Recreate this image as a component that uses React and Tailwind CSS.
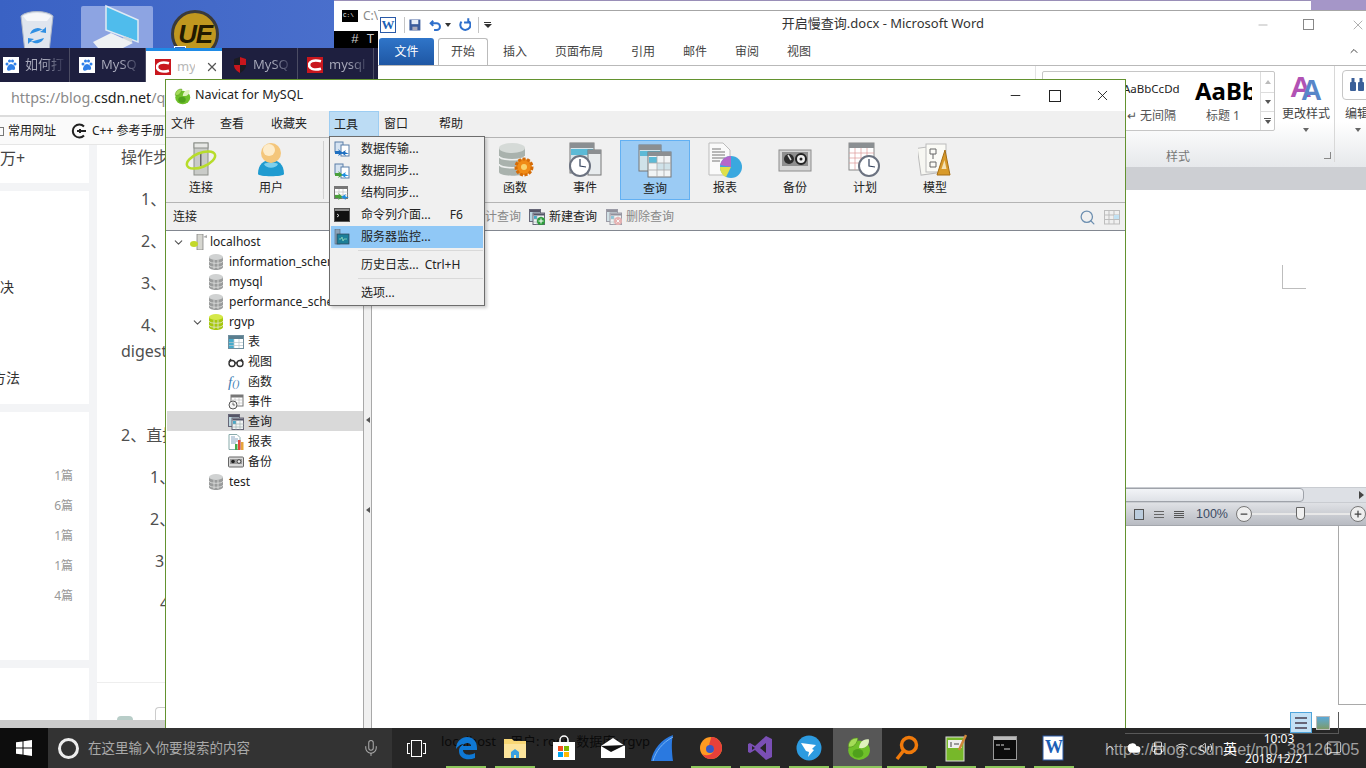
import { Minus, X, ChevronDown, ChevronUp, Search, Mic, Wifi, Volume2, Cloud, MessageSquare, Printer, Plus } from 'lucide-react'

const FONT = "[font-family:'Noto_Sans','Noto_Sans_CJK_SC',sans-serif]"

// ---------- icons ----------
function NavicatLogo({ size = 18 }) {
  return (
    <svg width={size} height={size} viewBox="0 0 24 24">
      <ellipse cx="13" cy="14" rx="10" ry="9" fill="#6fc02a" />
      <path d="M3 11C3 5 8 2 12 3 11 8 8 12 3 11z" fill="#a4dc58" stroke="#4f8d18" strokeWidth=".6" />
      <path d="M13 12c0-5 4-9 9-8 1 5-3 9-9 8z" fill="#dff2bd" />
      <ellipse cx="12" cy="17" rx="5" ry="4" fill="#4fa01b" />
    </svg>
  )
}

function ServerIcon() {
  return (
    <svg width="34" height="36" viewBox="0 0 34 36">
      <rect x="10" y="1" width="14" height="32" fill="#c9cbc8" stroke="#8c8f8a" />
      <rect x="10" y="1" width="14" height="5" fill="#e7e8e5" stroke="#8c8f8a" />
      <rect x="16" y="10" width="1.5" height="14" fill="#666" />
      <ellipse cx="17" cy="18" rx="15" ry="7" transform="rotate(-22 17 18)" fill="none" stroke="#b7dc2b" strokeWidth="2.5" />
    </svg>
  )
}

function UserIcon() {
  return (
    <svg width="30" height="36" viewBox="0 0 30 36">
      <path d="M2 32c0-10 6-14 13-14s13 4 13 14c0 3-26 3-26 0z" fill="#1f9bd0" />
      <path d="M8 22c3-2 11-2 14 0-2 5-12 5-14 0z" fill="#7fd0ec" />
      <circle cx="15" cy="11" r="10" fill="#f4c67b" />
      <circle cx="13" cy="8" r="6" fill="#fdeccb" />
    </svg>
  )
}

function TableBig() {
  return (
    <svg width="32" height="32" viewBox="0 0 32 32">
      <rect x="2" y="4" width="28" height="24" fill="#fff" stroke="#888" />
      <rect x="2" y="4" width="28" height="5" fill="#888" />
      <rect x="3" y="10" width="9" height="17" fill="#4fb5d6" />
      <path d="M2 15h28M2 21h28M12 9v19M21 9v19" stroke="#aaa" />
    </svg>
  )
}

function GlassesBig() {
  return (
    <svg width="32" height="32" viewBox="0 0 32 32" fill="none" stroke="#333" strokeWidth="2">
      <circle cx="9" cy="18" r="6" />
      <circle cx="23" cy="18" r="6" />
      <path d="M15 17h2M3 16l3-6M29 16l-3-6" />
    </svg>
  )
}

function DbGearIcon() {
  return (
    <svg width="38" height="36" viewBox="0 0 38 36">
      <path d="M3 6v24c0 5 26 5 26 0V6z" fill="#a9b2ad" />
      <ellipse cx="16" cy="6" rx="13" ry="5" fill="#d5dad7" />
      <path d="M3 14c0 5 26 5 26 0M3 22c0 5 26 5 26 0" fill="none" stroke="#eef0ef" strokeWidth="1.5" />
      <circle cx="28" cy="25" r="8" fill="#f08b16" stroke="#d46b08" strokeWidth="3" strokeDasharray="3 1.5" />
      <circle cx="28" cy="25" r="3" fill="#f9d26b" />
    </svg>
  )
}

function ClockFace({ x, y, r }) {
  return (
    <g>
      <circle cx={x} cy={y} r={r} fill="#fff" stroke="#6b7280" strokeWidth="2" />
      <path d={`M${x} ${y - r + 3}V${y}L${x + r - 4} ${y + 1}`} stroke="#33415c" strokeWidth="1.2" fill="none" />
    </g>
  )
}

function EventIcon() {
  return (
    <svg width="34" height="36" viewBox="0 0 34 36">
      <rect x="2" y="1" width="24" height="30" fill="#d8e6ec" stroke="#777" />
      <rect x="2" y="1" width="24" height="5" fill="#8b8f92" />
      <rect x="3" y="7" width="22" height="6" fill="#5cbad6" />
      <rect x="20" y="8" width="13" height="25" fill="#e8ecee" stroke="#777" />
      <rect x="20" y="8" width="13" height="4" fill="#8b8f92" />
      <ClockFace x={12} y={24} r={10} />
    </svg>
  )
}

function QueryIcon() {
  return (
    <svg width="34" height="34" viewBox="0 0 34 34">
      <rect x="1" y="1" width="22" height="26" fill="#cfe2e9" stroke="#777" />
      <rect x="1" y="1" width="22" height="5" fill="#8b8f92" />
      <rect x="2" y="7" width="20" height="5" fill="#5cbad6" />
      <rect x="10" y="8" width="23" height="25" fill="#f1f4f5" stroke="#777" />
      <rect x="10" y="8" width="23" height="4" fill="#8b8f92" />
      <rect x="11" y="13" width="8" height="6" fill="#5cbad6" />
      <rect x="19" y="19" width="13" height="7" fill="#cfe2e9" />
      <path d="M10 19h23M10 26h23M19 12v21M26 12v21" stroke="#aaa" strokeWidth=".8" />
    </svg>
  )
}

function ReportIcon() {
  return (
    <svg width="36" height="36" viewBox="0 0 36 36">
      <path d="M2 1h14l7 7v25H2z" fill="#fafafa" stroke="#bbb" />
      <path d="M5 7h9M5 10h13M5 13h13M5 16h13M5 19h8" stroke="#777" strokeWidth="1" />
      <circle cx="24" cy="25" r="11" fill="#3aa8df" />
      <path d="M24 25V14a11 11 0 0 0-11 9z" fill="#b567c9" />
      <path d="M24 25H13c0 5 3 9 6 10z" fill="#dfe04a" />
    </svg>
  )
}

function BackupIcon() {
  return (
    <svg width="34" height="28" viewBox="0 0 34 28">
      <rect x="1" y="4" width="32" height="21" fill="#d6d6d6" stroke="#8c8c8c" />
      <rect x="4" y="6" width="26" height="14" fill="#8f8f8f" />
      <circle cx="11" cy="13" r="5" fill="#2d2d2d" />
      <circle cx="23" cy="13" r="5" fill="#eee" stroke="#222" strokeWidth="2" />
      <circle cx="23" cy="13" r="1.5" fill="#222" />
      <path d="M10 9l3 5" stroke="#ddd" strokeWidth="1.5" />
    </svg>
  )
}

function ScheduleIcon() {
  return (
    <svg width="34" height="36" viewBox="0 0 34 36">
      <rect x="1" y="1" width="25" height="27" fill="#fff" stroke="#888" />
      <rect x="1" y="1" width="25" height="5" fill="#8b8f92" />
      <path d="M1 11h25M1 16h25M1 21h25M7 6v22M13 6v22M19 6v22" stroke="#d99" strokeWidth=".7" />
      <ClockFace x={21} y={24} r={10} />
    </svg>
  )
}

function ModelIcon() {
  return (
    <svg width="34" height="36" viewBox="0 0 34 36">
      <rect x="1" y="5" width="19" height="27" fill="#f7f7f2" stroke="#bbb" transform="rotate(-8 10 18)" />
      <rect x="8" y="2" width="20" height="28" fill="#fbfbf6" stroke="#bbb" />
      <path d="M12 7h6v5h-6zM15 12v5M12 20h6v5h-6z" fill="none" stroke="#666" />
      <path d="M27 8l5 25H19z" fill="#d89a2a" stroke="#a56d14" />
      <path d="M26.500 18l2 9h-5z" fill="#f4e2b5" />
    </svg>
  )
}

function MiniDb({ color = 'gray' }) {
  const body = color === 'lime' ? '#a7c80e' : '#9a9c9c'
  const top = color === 'lime' ? '#d5e84a' : '#d0d2d2'
  return (
    <svg width="14" height="16" viewBox="0 0 14 16" className="shrink-0">
      <path d="M0 3v10c0 4 14 4 14 0V3z" fill={body} />
      <ellipse cx="7" cy="3" rx="7" ry="3" fill={top} />
      <path d="M0 7c0 3 14 3 14 0M0 11c0 3 14 3 14 0M5 6v9M9 6v9" fill="none" stroke="#e9ebe9" strokeWidth=".7" />
    </svg>
  )
}

function HostIcon() {
  return (
    <svg width="18" height="16" viewBox="0 0 18 16" className="shrink-0">
      <rect x="7" y="0" width="6" height="16" fill="#d6d6d0" stroke="#777" strokeWidth=".7" />
      <path d="M13 3l4-2v3z" fill="#aaa" />
      <ellipse cx="4" cy="10" rx="4" ry="3" fill="#c3d82a" />
    </svg>
  )
}

const miniBase = { width: 16, height: 16, viewBox: '0 0 16 16', className: 'shrink-0' }
function MiniTable() {
  return (
    <svg {...miniBase}>
      <rect x=".5" y="1.500" width="15" height="13" fill="#fff" stroke="#6f8f9f" />
      <rect x="1" y="2" width="14" height="3" fill="#5b7e8e" />
      <rect x="1" y="5" width="5" height="9" fill="#45aacb" />
      <path d="M1 8.500h14M1 11.500h14M6 5v9M11 5v9" stroke="#b8c6cc" strokeWidth=".7" />
    </svg>
  )
}
function MiniGlasses() {
  return (
    <svg {...miniBase} fill="none" stroke="#333" strokeWidth="1.400">
      <circle cx="4" cy="9.500" r="3" />
      <circle cx="12" cy="9.500" r="3" />
      <path d="M7 9h2M1 8l2-3M15 8l-2-3" />
    </svg>
  )
}
function MiniFo() {
  return <span className="w-4 shrink-0 [font-family:'Liberation_Serif',serif] italic text-[15px] leading-none text-[#3f7fb5]">f<span className="text-[11px]">()</span></span>
}
function MiniEvent() {
  return (
    <svg {...miniBase}>
      <rect x="3" y="1" width="12" height="11" fill="#fff" stroke="#777" />
      <rect x="3" y="1" width="12" height="2.500" fill="#777" />
      <path d="M3 6h12M3 9h12M7 3v9M11 3v9" stroke="#bbb" strokeWidth=".6" />
      <circle cx="5" cy="11" r="4" fill="#f4f4f4" stroke="#555" />
      <path d="M5 8.500V11h2" stroke="#333" strokeWidth=".7" fill="none" />
    </svg>
  )
}
function MiniQuery({ badge }) {
  return (
    <svg {...miniBase}>
      <rect x=".5" y=".5" width="11" height="12" fill="#bcd6df" stroke="#667" />
      <rect x="1" y="1" width="10" height="2" fill="#556" />
      <rect x="4" y="4" width="11.500" height="11.500" fill="#f2f5f6" stroke="#667" />
      <rect x="4.500" y="4.500" width="11" height="2" fill="#556" />
      <rect x="5" y="7" width="3" height="3" fill="#45aacb" />
      <path d="M4 10h12M4 13h12M8 6v10M12 6v10" stroke="#9aa" strokeWidth=".6" />
      {badge === 'add' && <g><circle cx="12" cy="12" r="4" fill="#2e9c3c" /><path d="M12 9.500v5M9.500 12h5" stroke="#fff" /></g>}
      {badge === 'del' && <g><circle cx="12" cy="12" r="4" fill="#e08a8a" /><path d="M10.500 10.500l3 3M13.500 10.500l-3 3" stroke="#fff" /></g>}
    </svg>
  )
}
function MiniReport() {
  return (
    <svg {...miniBase}>
      <path d="M1 .5h8l3 3v12H1z" fill="#fff" stroke="#8aa" />
      <path d="M3 3h4M3 5h7M3 7h7M3 9h5" stroke="#6b8fb0" strokeWidth=".8" />
      <rect x="7" y="10" width="2.500" height="6" fill="#49a94a" />
      <rect x="10" y="6" width="2.500" height="10" fill="#e2483d" />
      <rect x="13" y="8" width="2.500" height="8" fill="#e8a33a" />
    </svg>
  )
}
function MiniBackup() {
  return (
    <svg {...miniBase}>
      <rect x=".5" y="3" width="15" height="10" rx="1" fill="#d8d8d8" stroke="#666" />
      <rect x="2" y="5" width="12" height="5" fill="#999" />
      <circle cx="5" cy="7.500" r="1.800" fill="#222" />
      <circle cx="11" cy="7.500" r="1.800" fill="#eee" stroke="#222" strokeWidth=".7" />
    </svg>
  )
}
function MenuDocs({ arrow = '#1f6fc0', table }) {
  return (
    <svg {...miniBase}>
      {table ? (
        <g>
          <rect x=".5" y="1.500" width="13" height="12" fill="#fff" stroke="#777" />
          <rect x="1" y="2" width="12" height="2" fill="#777" />
          <path d="M1 7h13M1 10h13M5 4v10M9 4v10" stroke="#bbb" strokeWidth=".6" />
        </g>
      ) : (
        <g>
          <rect x="1" y="1" width="8" height="10" fill="#d6e3f1" stroke="#5b7ea8" />
          <rect x="7" y="4" width="8" height="11" fill="#fff" stroke="#5b7ea8" />
        </g>
      )}
      <path d="M1 10l4 0-1-2 5 4-5 3 1-2-4 0z" fill={table ? '#49a03a' : arrow === '#1f6fc0' ? '#1f6fc0' : '#49a03a'} />
      <path d="M15 8l-4 0 1 2-5-3 5-3-1 2z" transform="translate(0 5)" fill={arrow} />
    </svg>
  )
}
function MenuConsole() {
  return (
    <svg {...miniBase}>
      <rect x=".5" y="1.500" width="15" height="13" fill="#111" stroke="#555" />
      <rect x="1" y="2" width="14" height="2" fill="#888" />
      <path d="M3 7l2 1.500L3 10" stroke="#fff" fill="none" strokeWidth=".8" />
    </svg>
  )
}
function MenuMonitor() {
  return (
    <svg {...miniBase}>
      <rect x="1" y="0" width="5" height="15" fill="#8ba3b8" stroke="#567" strokeWidth=".6" />
      <rect x="3" y="5" width="12" height="10" fill="#1d7f99" stroke="#345" strokeWidth=".7" />
      <path d="M5 10h2l1-2 1 4 1-2h3" stroke="#9fe6c0" fill="none" strokeWidth=".7" />
    </svg>
  )
}

function SearchMini() {
  return <Search size={17} className="text-[#6d8fb0]" strokeWidth={1.8} />
}
function GridMini() {
  return (
    <svg width="16" height="16" viewBox="0 0 16 16" fill="none" stroke="#bdbdbd">
      <path d="M.5 1v14M5 1v14M10 1v14M15.500 1v14M0 1.500h16M0 6h16M0 10.500h16M0 15h16" />
      <rect x="10" y="6" width="5" height="4" fill="#c2e2f4" stroke="none" />
    </svg>
  )
}

function RecycleBin() {
  return (
    <svg width="38" height="42" viewBox="0 0 38 42">
      <path d="M3 6c6-6 26-6 32 0l-4 36H7z" fill="#dfe5ee" stroke="#aeb8c8" />
      <path d="M5 6c8-4 20-4 28 0l-4 5H9z" fill="#f5f7fa" />
      <path d="M12 24a8 8 0 0 1 13-4l-3 2 6 1 0-6-2 2M26 28a8 8 0 0 1-13 3l3-2-6-1 0 6 2-2" fill="#2f8fe3" />
    </svg>
  )
}
function ComputerIcon() {
  return (
    <svg width="50" height="44" viewBox="0 0 50 44">
      <path d="M14 2l32 14v22L14 26z" fill="#4fbcec" stroke="#dfeaf4" strokeWidth="1.500" />
      <path d="M32 32l8 3 0 4-10-2z" fill="#cfd6dc" />
      <path d="M1 38l18-9 22 10-10 5H6z" fill="#eef1f4" />
    </svg>
  )
}
function UeCoin() {
  return (
    <div className="relative flex h-12 w-12 items-center justify-center rounded-full border-[3px] border-[#3a3a3a] bg-[#c0971f]">
      <span className="[font-family:'Liberation_Sans',sans-serif] text-[26px] font-bold italic leading-none tracking-tighter text-[#221a00]">UE</span>
      <span className="absolute bottom-[1px] left-0 h-[8px] w-[12px] border border-white bg-[#2f66c4]" />
    </div>
  )
}
function PawTile() {
  return (
    <div className="flex h-4 w-4 shrink-0 items-center justify-center bg-white">
      <svg width="14" height="14" viewBox="0 0 14 14" fill="#2f7fe8">
        <circle cx="3" cy="6" r="1.500" /><circle cx="5.500" cy="3" r="1.500" /><circle cx="8.500" cy="3" r="1.500" /><circle cx="11" cy="6" r="1.500" />
        <path d="M7 6c-2 0-4 3-4 5s2 2 4 1 3 1 4-1-2-5-4-5z" />
      </svg>
    </div>
  )
}
function CsdnTile() {
  return (
    <div className="flex h-4 w-4 shrink-0 items-center justify-center bg-[#c9171e]">
      <svg width="14" height="12" viewBox="0 0 14 12" fill="none" stroke="#fff" strokeWidth="2.600"><path d="M13 2.300C5 0 1 3 1 6s4 6 12 3.700" /></svg>
    </div>
  )
}
function ShieldTile() {
  return (
    <svg width="14" height="16" viewBox="0 0 14 16" className="shrink-0">
      <path d="M1 2l6-2 6 2v6c0 4-3 6-6 8-3-2-6-4-6-8z" fill="#1b1b22" />
      <path d="M7 0l6 2v6H7zM1 8h6v8c-3-2-6-4-6-8z" fill="#c8161d" />
    </svg>
  )
}
function WordLogo({ size = 16 }) {
  return (
    <div style={{ width: size, height: size }} className="flex shrink-0 items-center justify-center border border-[#2a5aa8] bg-white">
      <span className="[font-family:'Liberation_Serif',serif] text-[13px] font-bold leading-none text-[#1c5fb6]">W</span>
    </div>
  )
}

// ---------- browser behind everything ----------
const tabs = [
  { text: '如何打', icon: <PawTile />, w: 'w-[70px]', pad: 'pl-[3px]' },
  { text: 'MySQ', icon: <PawTile />, w: 'w-[76px]', pad: 'pl-[9px]' },
  { text: 'my', icon: <CsdnTile />, w: 'w-[76px]', pad: 'pl-[9px]', active: true },
  { text: 'MySQ', icon: <ShieldTile />, w: 'w-[76px]', pad: 'pl-[11px]' },
  { text: 'mysql', icon: <CsdnTile />, w: 'w-[76px]', pad: 'pl-[9px]' },
]

const bodyLines = [
  { t: '操作步骤', cls: 'pl-[24px]', mt: 'mt-0' },
  { t: '1、', cls: 'pl-[44px]', mt: 'mt-[18px]' },
  { t: '2、', cls: 'pl-[44px]', mt: 'mt-[18px]' },
  { t: '3、', cls: 'pl-[44px]', mt: 'mt-[18px]' },
  { t: '4、', cls: 'pl-[44px]', mt: 'mt-[18px]' },
  { t: 'digest', cls: 'pl-[24px]', mt: 'mt-[2px]' },
  { t: '2、直接', cls: 'pl-[24px]', mt: 'mt-[60px]' },
  { t: '1、', cls: 'pl-[53px]', mt: 'mt-[18px]' },
  { t: '2、', cls: 'pl-[53px]', mt: 'mt-[18px]' },
  { t: '3', cls: 'pl-[58px]', mt: 'mt-[18px]' },
  { t: '4', cls: 'pl-[63px]', mt: 'mt-[18px]' },
]

function Browser() {
  return (
    <div className="absolute left-0 top-[48px] flex h-[680px] w-[380px] flex-col overflow-hidden bg-[#f3f4f6]">
      <div className="flex h-[34px] shrink-0 bg-[#1e1f3f]">
        {tabs.map((t, i) => (
          <div
            key={i}
            className={`flex ${t.w} ${t.pad} shrink-0 items-center gap-[6px] text-[13px] ${t.active ? 'border-t-[3px] border-[#1f8be6] bg-white text-[#b7b7b7]' : 'border-r border-[#4b4c63] text-[#8e8fa0]'}`}
          >
            {t.icon}
            {t.active ? (
              <span className="w-[18px] overflow-hidden whitespace-nowrap">{t.text}</span>
            ) : (
              <span className="w-[40px] overflow-hidden whitespace-nowrap bg-gradient-to-r from-[#a9aabb] from-50% to-[#2a2b4a] bg-clip-text text-transparent">{t.text}</span>
            )}
            {t.active && <X size={14} strokeWidth={2.2} className="ml-[4px] shrink-0 text-[#555]" />}
          </div>
        ))}
      </div>
      <div className="flex h-[35px] shrink-0 items-center border-b-2 border-[#dcdcdc] bg-white pl-[11px] text-[14.300px] leading-none text-[#8a8a8a]">
        https://blog.<span className="text-[#222]">csdn.net</span>/q
      </div>
      <div className="flex h-[28px] shrink-0 items-center gap-[3px] whitespace-nowrap border-b border-[#e6e6e6] bg-[#fafafa] pt-px text-[12px] text-[#222]">
        <div className="ml-[-3px] mr-[1px] h-[9px] w-[7px] border border-[#777]" />
        <span>常用网址</span>
        <svg width="16" height="16" viewBox="0 0 16 16" fill="none" stroke="#222" strokeWidth="2" className="ml-[12px]">
          <path d="M13 3.500A6.500 6.500 0 1 0 13 12.500M6 8h9M9 6v4" />
        </svg>
        <span className="ml-[2px]">C++ 参考手册</span>
      </div>
      <div className="flex flex-1 overflow-hidden">
        <div className="flex w-[89px] shrink-0 flex-col gap-2">
          <div className="h-[38px] shrink-0 bg-white pt-[1px] text-[16px] text-[#444]">万+</div>
          <div className="flex h-[213px] shrink-0 flex-col bg-white text-[14px] text-[#333]">
            <div className="mt-[85px]">决</div>
            <div className="ml-[-8px] mt-[70px]">方法</div>
          </div>
          <div className="flex h-[248px] shrink-0 flex-col items-end gap-[12px] bg-white pr-[16px] pt-[55px] text-[12px] leading-[18px] text-[#999]">
            {['1篇', '6篇', '1篇', '1篇', '4篇'].map((c, i) => <span key={i}>{c}</span>)}
          </div>
          <div className="flex-1 bg-white" />
        </div>
        <div className="relative ml-2 flex-1 bg-white">
          {bodyLines.map((l, i) => (
            <div key={i} className={`h-6 whitespace-nowrap text-[16px] leading-6 text-[#4f4f4f] ${l.cls} ${l.mt}`}>{l.t}</div>
          ))}
          <div className="absolute bottom-[30px] left-0 right-0 h-[8px] border-t border-[#eee]" />
          <div className="absolute bottom-0 left-[20px] h-[4px] w-[16px] rounded-t-full bg-[#b8cdc8]" />
          <div className="absolute bottom-0 left-[58px] h-[13px] w-full rounded-tl-sm border-l border-t border-[#ccc]" />
        </div>
      </div>
      <div className="h-[8px] shrink-0 bg-[#cccccc]" />
    </div>
  )
}

// ---------- word ----------
function Word() {
  return (
    <div className="absolute left-[378px] top-[10px] flex h-[516px] w-[988px] flex-col overflow-hidden border-t border-[#a6a6a6] bg-white">
      <div className="flex h-[27px] shrink-0 items-center text-[#444]">
        <div className="ml-[2px]"><WordLogo /></div>
        <div className="ml-[8px] h-4 w-px bg-[#c5c5c5]" />
        <svg width="14" height="14" viewBox="0 0 14 14" className="ml-[4px]"><rect x=".5" y=".5" width="13" height="13" fill="#3c5c9c" /><rect x="3" y="1" width="8" height="5" fill="#e8eef8" /><rect x="4" y="9" width="6" height="4" fill="#aab" /></svg>
        <svg width="16" height="16" viewBox="0 0 16 16" fill="none" stroke="#2e6fcb" strokeWidth="2.400" className="ml-[8px]"><path d="M5 3L2 6l3 3M2 6h7a4 4 0 0 1 0 8H6" /></svg>
        <span className="ml-[3px] h-0 w-0 border-x-[3px] border-t-[4px] border-x-transparent border-t-[#333]" />
        <svg width="14" height="15" viewBox="0 0 14 15" fill="none" stroke="#2e6fcb" strokeWidth="2.400" className="ml-[8px]"><path d="M11 3a6 6 0 1 1-8 1M11 0v5H6" /></svg>
        <div className="ml-[7px] h-4 w-px bg-[#c5c5c5]" />
        <div className="ml-[5px] flex flex-col items-center gap-[1px]"><span className="h-px w-[7px] bg-[#333]" /><span className="h-0 w-0 border-x-[4px] border-t-[4px] border-x-transparent border-t-[#333]" /></div>
        <div className="mb-[2px] ml-[290px] w-[210px] whitespace-nowrap text-[13px] text-[#333]">开启慢查询.docx - Microsoft Word</div>
        <Minus size={14} strokeWidth={1} className="ml-[272px] shrink-0 text-[#888]" />
        <span className="ml-[33px] h-[11px] w-[11px] shrink-0 border border-[#888]" />
        <X size={16} strokeWidth={1} className="ml-[36px] shrink-0 text-[#888]" />
      </div>
      <div className="flex h-[27px] shrink-0 items-end text-[12px] text-[#444]">
        <div className="ml-px flex h-[27px] w-[55px] items-center justify-center rounded-t-[3px] bg-gradient-to-b from-[#2f75c9] to-[#1f57a4] text-white">文件</div>
        <div className="ml-[4px] flex h-[27px] w-[50px] items-center justify-center rounded-t-[3px] border border-b-0 border-[#bbb] bg-white">开始</div>
        <div className="ml-[15px] flex h-[27px] items-center gap-[28px]">
          <span>插入</span><span>页面布局</span><span>引用</span><span>邮件</span><span>审阅</span><span>视图</span>
        </div>
        <ChevronUp size={12} strokeWidth={2} className="mb-[8px] ml-[537px] shrink-0 text-[#444]" />
      </div>
      <div className="flex h-[102px] shrink-0 border-t border-[#b9b9b9] bg-gradient-to-b from-white from-55% to-[#e6e8eb]">
        <div className="ml-[657px] h-[96px] w-px shrink-0 bg-[#e3e3e3]" />
        <div className="ml-[6px] flex w-[292px] shrink-0 flex-col">
          <div className="flex h-[65px] items-start pt-[5px]">
            <div className="flex h-[60px] w-[233px] shrink-0 rounded-[2px] border border-[#c6c6c6] bg-white">
              <div className="flex w-[209px] shrink-0 overflow-hidden pl-[80px] pt-[7px]">
                <div className="flex w-[72px] shrink-0 flex-col">
                  <span className="whitespace-nowrap text-[11.500px] leading-[20px] text-[#222]">AaBbCcDd</span>
                  <span className="mt-[8px] whitespace-nowrap pl-[4px] text-[12px] leading-[18px] text-[#555]">↵ 无间隔</span>
                </div>
                <div className="flex shrink-0 flex-col">
                  <span className="whitespace-nowrap text-[24px] font-bold leading-[24px] text-black">AaBb</span>
                  <span className="mt-[4px] whitespace-nowrap pl-[11px] text-[12px] leading-[18px] text-[#555]">标题 1</span>
                </div>
              </div>
              <div className="ml-auto flex w-[14px] shrink-0 flex-col border-l border-[#ddd] text-[#666]">
                <div className="flex h-[20px] items-center justify-center"><span className="h-0 w-0 border-x-[3px] border-b-[4px] border-x-transparent border-b-[#bbb]" /></div>
                <div className="flex h-[20px] items-center justify-center border-y border-[#ddd]"><span className="h-0 w-0 border-x-[3px] border-t-[4px] border-x-transparent border-t-[#555]" /></div>
                <div className="flex flex-1 flex-col items-center justify-center gap-[1px]"><span className="h-px w-[7px] bg-[#555]" /><span className="h-0 w-0 border-x-[3px] border-t-[4px] border-x-transparent border-t-[#555]" /></div>
              </div>
            </div>
            <div className="flex w-[58px] shrink-0 flex-col items-center pl-[4px]">
              <div className="relative h-[32px] w-[32px] [font-family:'Liberation_Sans',sans-serif]">
                <span className="absolute left-0 top-0 text-[30px] font-bold leading-[32px] text-[#b152b4]">A</span>
                <span className="absolute left-[11px] top-[3px] text-[29px] font-bold leading-[32px] text-[#5886c9]">A</span>
              </div>
              <span className="mt-[3px] whitespace-nowrap text-[12px] leading-[16px] text-[#444]">更改样式</span>
              <span className="mt-[6px] h-0 w-0 border-x-[3px] border-t-[4px] border-x-transparent border-t-[#666]" />
            </div>
          </div>
          <div className="relative mt-[17px] pl-[124px] text-[12px] leading-[18px] text-[#777]">
            样式
            <span className="absolute right-[3px] top-[4px] h-[7px] w-[7px] border-b border-r border-[#888]" />
          </div>
        </div>
        <div className="h-[96px] w-px shrink-0 bg-[#d8d8d8]" />
        <div className="ml-[7px] flex shrink-0 flex-col">
          <div className="mt-[4px] flex h-[30px] w-[40px] items-center rounded border border-[#c6c6c6] bg-white pl-[6px]">
            <svg width="16" height="14" viewBox="0 0 16 14" fill="#3a5f99"><rect x="1" y="4" width="6" height="9" rx="1" /><rect x="9" y="4" width="6" height="9" rx="1" /><rect x="2.500" y="0" width="3" height="5" /><rect x="10.500" y="0" width="3" height="5" /></svg>
          </div>
          <span className="ml-[3px] mt-[6px] whitespace-nowrap text-[12px] leading-[16px] text-[#444]">编辑</span>
          <span className="ml-[13px] mt-[6px] h-0 w-0 border-x-[3px] border-t-[4px] border-x-transparent border-t-[#666]" />
        </div>
      </div>
      <div className="h-[23px] shrink-0 bg-[#cdcfd3]" />
      <div className="relative flex-1 bg-white">
        <div className="absolute left-[904px] top-[75px] h-[24px] w-[24px] border-b border-l border-[#bdbdbd]" />
      </div>
      <div className="flex h-[16px] shrink-0 border-y border-[#c9ccd1] bg-[#dde0e5]">
        <div className="ml-[700px] w-[226px] shrink-0 rounded-sm border border-[#9fa3aa] bg-gradient-to-b from-[#f2f4f7] to-[#dfe2e7]" />
        <span className="ml-[55px] mt-[3px] h-0 w-0 border-y-[4px] border-l-[5px] border-y-transparent border-l-[#444]" />
      </div>
      <div className="flex h-[23px] shrink-0 items-center border-b border-[#a4a7ad] bg-gradient-to-b from-[#dfe1e5] to-[#b8bbc2] text-[#444]">
        <div className="ml-[743px] flex shrink-0 items-center gap-[10px]">
          <span className="h-[9px] w-[3px] border border-[#555]" />
          <span className="h-[11px] w-[10px] border border-[#555] bg-[#bcd] " />
          <div className="flex w-[10px] flex-col gap-[2px]"><span className="h-px bg-[#666]" /><span className="h-px bg-[#666]" /><span className="h-px bg-[#666]" /></div>
          <div className="flex w-[10px] flex-col gap-px"><span className="h-px bg-[#555]" /><span className="h-px bg-[#555]" /><span className="h-px bg-[#555]" /><span className="h-px bg-[#555]" /></div>
        </div>
        <span className="ml-[12px] shrink-0 [font-family:'Liberation_Sans',sans-serif] text-[12.500px] text-[#3b4a63]">100%</span>
        <div className="ml-[8px] flex h-4 w-4 shrink-0 items-center justify-center rounded-full border border-[#777] bg-[#eee]"><Minus size={10} strokeWidth={3} /></div>
        <div className="relative h-[2px] w-[98px] shrink-0 bg-[#e8e8e8]">
          <div className="absolute left-[44px] top-[-6px] h-[13px] w-[9px] rounded-b-[4px] border border-[#666] bg-[#f0f0f0]" />
        </div>
        <div className="flex h-4 w-4 shrink-0 items-center justify-center rounded-full border border-[#777] bg-[#eee]"><Plus size={10} strokeWidth={3} /></div>
      </div>
    </div>
  )
}

// ---------- navicat ----------
const menuBar = [
  { t: '文件', cls: 'ml-[5px]' },
  { t: '查看', cls: 'ml-[25px]' },
  { t: '收藏夹', cls: 'ml-[27px]' },
  { t: '工具', cls: 'ml-[22px] h-[26px] w-[50px] pl-[4px] bg-[#bcdcf4] border border-[#9dcdf2] border-b-0', active: true },
  { t: '窗口', cls: 'ml-[5px]' },
  { t: '帮助', cls: 'ml-[31px]' },
]

const tools = [
  { t: '连接', icon: <ServerIcon /> },
  { t: '用户', icon: <UserIcon /> },
  { sep: true },
  { t: '表', icon: <TableBig /> },
  { t: '视图', icon: <GlassesBig /> },
  { t: '函数', icon: <DbGearIcon /> },
  { t: '事件', icon: <EventIcon /> },
  { t: '查询', icon: <QueryIcon />, active: true },
  { t: '报表', icon: <ReportIcon /> },
  { t: '备份', icon: <BackupIcon /> },
  { t: '计划', icon: <ScheduleIcon /> },
  { t: '模型', icon: <ModelIcon /> },
]

const tree = [
  { t: 'localhost', icon: <HostIcon />, chev: true, level: 0 },
  { t: 'information_schema', icon: <MiniDb />, level: 1 },
  { t: 'mysql', icon: <MiniDb />, level: 1 },
  { t: 'performance_schema', icon: <MiniDb />, level: 1 },
  { t: 'rgvp', icon: <MiniDb color="lime" />, chev: true, level: 1 },
  { t: '表', icon: <MiniTable />, level: 2 },
  { t: '视图', icon: <MiniGlasses />, level: 2 },
  { t: '函数', icon: <MiniFo />, level: 2 },
  { t: '事件', icon: <MiniEvent />, level: 2 },
  { t: '查询', icon: <MiniQuery />, level: 2, active: true },
  { t: '报表', icon: <MiniReport />, level: 2 },
  { t: '备份', icon: <MiniBackup />, level: 2 },
  { t: 'test', icon: <MiniDb />, level: 1 },
]

function TreeRow({ row }) {
  const indent = row.level === 0 ? 'pl-[5px]' : row.level === 1 ? (row.chev ? 'pl-[24px]' : 'pl-[42px]') : 'pl-[61px]'
  return (
    <div className={`flex h-5 items-center whitespace-nowrap pt-[2px] text-[12px] text-[#222] ${indent} ${row.active ? 'bg-[#d9d9d9]' : ''}`}>
      {row.chev && <ChevronDown size={13} strokeWidth={2} className="mr-[5px] shrink-0 text-[#555]" />}
      {row.icon}
      <span className={row.level === 0 ? 'ml-[2px]' : row.level === 1 ? 'ml-[6px]' : 'ml-[4px]'}>{row.t}</span>
    </div>
  )
}

function Navicat() {
  return (
    <div className={`absolute left-[165px] top-[79px] flex h-[649px] w-[961px] flex-col border-x border-t border-[#63922f] bg-white ${FONT}`}>
      <div className="flex h-[31px] shrink-0 items-center pl-[7px]">
        <NavicatLogo />
        <span className="ml-[4px] text-[12.500px] text-[#222]">Navicat for MySQL</span>
        <Minus size={15} strokeWidth={1.4} className="ml-auto text-[#111]" />
        <span className="ml-[26px] h-3 w-3 border-[1.5px] border-[#222]" />
        <X size={17} strokeWidth={1.2} className="ml-[33px] mr-[14px] text-[#111]" />
      </div>
      <div className="flex h-[27px] shrink-0 items-center border-b border-[#b4b4b4] bg-[#f0f0f0] text-[12px] text-[#222]">
        {menuBar.map(m => (
          <div key={m.t} className={`flex items-center ${m.cls}`}>{m.t}</div>
        ))}
      </div>
      <div className="flex h-[65px] shrink-0 items-center border-b border-[#b4b4b4] bg-[#f0f0f0]">
        {tools.map((b, i) => b.sep ? (
          <div key={i} className="ml-[17px] mr-[16px] h-[58px] w-px bg-[#cfcfcf]" />
        ) : (
          <div key={i} className={`flex h-[60px] w-[70px] shrink-0 flex-col items-center ${b.active ? 'border border-[#62b0f3] bg-[#9bcbf4]' : ''}`}>
            <div className="flex h-[39px] items-center">{b.icon}</div>
            <span className="text-[12px] leading-[18px] text-[#222]">{b.t}</span>
          </div>
        ))}
      </div>
      <div className="flex h-[28px] shrink-0 items-center border-b border-[#828790] bg-[#f0f0f0] pl-[7px] pr-[5px] pt-px text-[12px] text-[#888]">
        <span className="text-[#222]">连接</span>
        <span className="ml-[145px]">打开查询</span>
        <span className="ml-[83px]">设计查询</span>
        <div className="ml-[8px]"><MiniQuery badge="add" /></div>
        <span className="ml-[4px] text-[#222]">新建查询</span>
        <div className="ml-[9px] opacity-60"><MiniQuery badge="del" /></div>
        <span className="ml-[4px]">删除查询</span>
        <div className="ml-auto mr-[8px]"><SearchMini /></div>
        <GridMini />
      </div>
      <div className="flex min-h-0 flex-1">
        <div className="w-[197px] shrink-0 overflow-hidden pl-px">
          {tree.map(r => <TreeRow key={r.t} row={r} />)}
        </div>
        <div className="flex w-[9px] shrink-0 flex-col items-center border-x border-[#a8a8a8] bg-[#f0f0f0] pt-[186px]">
          <span className="h-0 w-0 border-y-[3px] border-r-[4px] border-y-transparent border-r-[#555]" />
          <span className="mt-[84px] h-0 w-0 border-y-[3px] border-r-[4px] border-y-transparent border-r-[#555]" />
        </div>
        <div className="flex-1 bg-white" />
      </div>
    </div>
  )
}

const toolMenu = [
  { t: '数据传输...', icon: <MenuDocs /> },
  { t: '数据同步...', icon: <MenuDocs arrow="#1f8fdf" /> },
  { t: '结构同步...', icon: <MenuDocs table arrow="#1f8fdf" /> },
  { t: '命令列介面...', icon: <MenuConsole />, key: 'F6', keyCls: 'ml-[19px]' },
  { t: '服务器监控...', icon: <MenuMonitor />, active: true },
  { sep: true },
  { t: '历史日志...', key: 'Ctrl+H', keyCls: 'ml-[6px]', tall: true },
  { sep: true },
  { t: '选项...', tall: true },
]

function ToolMenu() {
  return (
    <div className={`absolute left-[329px] top-[136px] h-[170px] w-[156px] border border-[#6d6d6d] bg-[#f0f0f0] px-px pt-[1px] shadow-[2px_2px_3px_rgba(0,0,0,0.2)] ${FONT}`}>
      {toolMenu.map((m, i) => m.sep ? (
        <div key={i} className="my-[2px] ml-[27px] h-px bg-[#d9d9d9]" />
      ) : (
        <div key={i} className={`flex items-center text-[12px] text-[#222] ${m.tall ? 'mt-[-1px] h-[24px] pt-[2px]' : 'h-[22px]'} ${m.active ? 'bg-[#90c8f6]' : ''}`}>
          <div className="flex w-[30px] justify-start pl-[3px]">{m.icon}</div>
          <span className="whitespace-nowrap">{m.t}</span>
          {m.key && <span className={`whitespace-nowrap ${m.keyCls}`}>{m.key}</span>}
        </div>
      ))}
    </div>
  )
}

// ---------- taskbar ----------
const pinned = [
  { id: 'edge', on: true, el: <svg width="24" height="24" viewBox="0 0 24 24"><path d="M2 13C2 5 8 1 13 1c6 0 10 4 10 11v2H9c0 5 7 6 12 3v5c-7 3-16 1-16-7 0-4 3-6 5-7-3 0-6 2-8 5zm7-3h8c0-4-7-4-8 0z" fill="#0f78d4" /></svg> },
  { id: 'folder', on: true, el: <svg width="24" height="22" viewBox="0 0 24 22"><path d="M1 2h8l2 2h12v17H1z" fill="#f8d775" /><path d="M1 7h22v14H1z" fill="#fce49c" /><path d="M8 21v-6l4-3 4 3v6h-3v-3h-2v3z" fill="#3aa0e0" /></svg> },
  { id: 'store', el: <svg width="24" height="26" viewBox="0 0 24 26"><path d="M8 8V5a4 4 0 0 1 8 0v3" fill="none" stroke="#fff" strokeWidth="1.500" /><rect x="1" y="7" width="22" height="18" fill="#fff" /><rect x="6" y="11" width="5" height="5" fill="#f25022" /><rect x="12" y="11" width="5" height="5" fill="#7fba00" /><rect x="6" y="17" width="5" height="5" fill="#00a4ef" /><rect x="12" y="17" width="5" height="5" fill="#ffb900" /></svg> },
  { id: 'mail', el: <svg width="24" height="20" viewBox="0 0 24 20"><path d="M0 8l12-8 12 8v12H0z" fill="#fff" /><path d="M0 8l24-1-14 7z" fill="#111" /></svg> },
  { id: 'shark', el: <svg width="24" height="26" viewBox="0 0 24 26"><path d="M1 26C3 14 12 4 23 0c-2 8-1 18 0 26z" fill="#2a79e0" /><path d="M3 26C6 16 12 8 23 2" stroke="#74b2f4" fill="none" /></svg> },
  { id: 'firefox', on: true, el: <svg width="24" height="24" viewBox="0 0 24 24"><circle cx="12" cy="12" r="11" fill="#ff9a22" /><path d="M12 1a11 11 0 0 1 11 11c0 6-5 11-11 11-4 0-7-2-9-5 6 3 12 0 12-5 0-3-3-4-5-3 0-3 2-6 2-9z" fill="#e8403a" /><circle cx="11" cy="13" r="4" fill="#3658c6" /></svg> },
  { id: 'vs', on: true, el: <svg width="24" height="26" viewBox="0 0 24 26" fill="#7a4fb5"><path d="M18 1l6 3v18l-6 3-11-10-5 3-2-1V9l2-1 5 3zM4 11v4l3-2zM18 8l-6 5 6 5z" /></svg> },
  { id: 'ding', on: true, el: <svg width="26" height="26" viewBox="0 0 26 26"><circle cx="13" cy="13" r="12.500" fill="#2d9be0" /><path d="M5 8l15 2-4 4 2 1-6 7 1-5-3-1z" fill="#fff" /></svg> },
  { id: 'navicat', on: true, active: true, el: <NavicatLogo size={26} /> },
  { id: 'find', on: true, el: <svg width="24" height="26" viewBox="0 0 24 26" fill="none" stroke="#f07a0b" strokeWidth="3.500"><circle cx="14" cy="10" r="7.500" /><path d="M9 15L2 24" /></svg> },
  { id: 'notepad', on: true, el: <svg width="22" height="28" viewBox="0 0 22 28"><rect x="1" y="3" width="18" height="24" fill="#77b82a" stroke="#ddd" /><rect x="3" y="6" width="14" height="8" fill="#eee" /><path d="M6 8v5M9 10h5" stroke="#444" /><path d="M14 16l7-15" stroke="#d0873a" strokeWidth="2.500" /></svg> },
  { id: 'cmd', on: true, el: <svg width="24" height="24" viewBox="0 0 24 24"><rect x=".5" y=".5" width="23" height="23" fill="#0c0c0c" stroke="#999" /><rect x="1" y="1" width="22" height="3" fill="#bbb" /><path d="M3 9h4M8 9h3M11 13h6" stroke="#ddd" /></svg> },
  { id: 'word', on: true, el: <svg width="24" height="26" viewBox="0 0 24 26"><rect x="1" y="1" width="20" height="24" fill="#fff" stroke="#2a5aa8" /><text x="3" y="18" fontFamily="Liberation Serif" fontWeight="bold" fontSize="18" fill="#1c5fb6">W</text></svg> },
]

function Taskbar() {
  return (
    <div className={`absolute bottom-0 left-0 flex h-10 w-[1366px] items-stretch bg-[#262626] ${FONT}`}>
      <div className="flex w-12 shrink-0 items-center justify-center bg-[#0d0d0d]">
        <svg width="16" height="16" viewBox="0 0 16 16" fill="#fff"><path d="M0 2.300L6.500 1.400V7.500H0zM7.500 1.300L16 0V7.500H7.500zM0 8.500H6.500V14.600L0 13.700zM7.500 8.500H16V16L7.500 14.700z" /></svg>
      </div>
      <div className="flex w-[344px] shrink-0 items-center bg-[#333333] pl-[10px]">
        <span className="h-[21px] w-[21px] rounded-full border-[3px] border-[#ededed]" />
        <span className="ml-[9px] text-[13.500px] text-[#a9a9a9]">在这里输入你要搜索的内容</span>
        <Mic size={18} strokeWidth={1.4} className="ml-auto mr-[12px] text-[#a9a9a9]" />
      </div>
      <div className="relative flex flex-1 items-center">
        <span className="absolute left-[49px] top-[4px] whitespace-nowrap text-[13px] text-[#0a0a0a]">localhost<span className="ml-[14px]">用户: root</span><span className="ml-[8px]">数据库: rgvp</span></span>
        <div className="ml-[15px] flex h-[17px] w-[19px] items-center justify-between">
          <span className="h-[11px] w-[3px] border-y border-l border-white" />
          <span className="h-[17px] w-[11px] border border-white" />
          <span className="h-[11px] w-[3px] border-y border-r border-white" />
        </div>
        <div className="ml-[15px] flex">
          {pinned.map(p => (
            <div key={p.id} className={`relative flex h-10 w-[49px] items-center justify-center ${p.active ? 'bg-[#575757]' : ''}`}>
              {p.el}
              {p.on && <span className={`absolute bottom-0 h-[2px] bg-[#8dc75c] ${p.active ? 'inset-x-0' : 'left-[5px] right-[4px]'}`} />}
            </div>
          ))}
        </div>
        <div className="ml-[25px] flex items-center gap-[10px] text-white">
          <ChevronUp size={14} strokeWidth={1.2} className="shrink-0" />
          <Cloud size={14} fill="#fff" className="shrink-0" />
          <Printer size={14} strokeWidth={1.4} className="shrink-0" />
          <Wifi size={14} strokeWidth={1.4} className="shrink-0" />
          <Volume2 size={14} strokeWidth={1.4} className="shrink-0" />
          <span className="whitespace-nowrap text-[14px]">英</span>
        </div>
        <div className="ml-[7px] mt-[2px] flex w-[66px] shrink-0 flex-col items-center whitespace-nowrap text-[12px] leading-[20px] text-white">
          <span className="pl-[4px]">10:03</span>
          <span>2018/12/21</span>
        </div>
        <MessageSquare size={16} strokeWidth={1.2} className="ml-[16px] shrink-0 text-white" />
      </div>
    </div>
  )
}

export default function App() {
  return (
    <div className={`relative h-[768px] w-[1366px] overflow-hidden bg-white ${FONT}`}>
      {/* desktop strip */}
      <div className="absolute left-0 top-0 flex h-[48px] w-[340px] items-end overflow-hidden bg-gradient-to-r from-[#3a62c4] to-[#4a6fcc]">
        <div className="mb-[-4px] ml-[18px]"><RecycleBin /></div>
        <div className="ml-[25px] flex h-[42px] w-[72px] items-end justify-center rounded-t-[2px] bg-[#8da4e2]"><ComputerIcon /></div>
        <div className="mb-[-10px] ml-[18px]"><UeCoin /></div>
      </div>
      <div className="absolute left-[1311px] top-0 h-[10px] w-[55px] bg-[#a596c8]" />

      {/* console behind word */}
      <div className="absolute left-[334px] top-0 h-[48px] w-[977px] border-t border-[#9a8fb8] bg-white">
        <div className="flex h-[30px] items-center pl-[8px] text-[12px] text-[#888]">
          <div className="flex h-3 w-4 items-center bg-black pl-px font-mono text-[6px] leading-none text-white">C:\</div>
          <span className="ml-[5px]">C:\</span>
        </div>
        <div className="h-[18px] bg-black pl-[17px] font-mono text-[13px] leading-[18px] text-[#ccc]">#&nbsp;T</div>
      </div>

      <Browser />

      {/* other window under word */}
      <div className="absolute left-[1125px] top-[526px] h-[202px] w-[241px] bg-white">
        <div className="h-[178px] w-[214px] border-r border-[#a9a9a9]" />
        <div className="absolute left-[213px] top-[178px] h-px w-[28px] bg-[#a9a9a9]" />
      </div>

      <Word />
      <Navicat />
      <ToolMenu />
      <Taskbar />

      {/* status icons of the window behind the translucent taskbar */}
      <div className="absolute left-[1125px] top-[712px] flex h-[22px] w-[214px] items-start border-b border-r border-[#595959]">
        <div className="ml-[165px] flex h-[21px] w-[22px] flex-col justify-center gap-[3px] border border-[#4fa5dc] bg-[#c3e1f5] px-[4px]">
          <span className="h-[2px] bg-[#667]" /><span className="h-[2px] bg-[#667]" /><span className="h-[2px] bg-[#667]" />
        </div>
        <div className="ml-[4px] mt-[4px] h-[14px] w-[14px] border border-[#bbb] bg-gradient-to-b from-[#5aa8d8] to-[#7c9a68]" />
      </div>

      {/* csdn watermark */}
      <div className="absolute left-[1105px] top-[739px] whitespace-nowrap [font-family:'Liberation_Sans',sans-serif] text-[16.300px] leading-5 text-[#ffffff90]">https://blog.csdn.net/m0_38126105</div>
    </div>
  )
}
